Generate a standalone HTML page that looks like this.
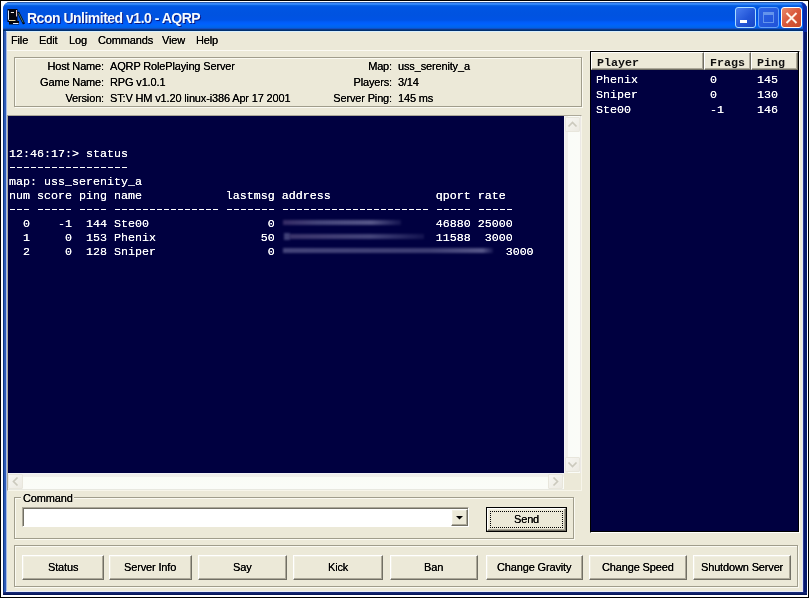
<!DOCTYPE html>
<html><head><meta charset="utf-8">
<style>
*{margin:0;padding:0;box-sizing:border-box}
html,body{width:809px;height:598px;overflow:hidden;background:#fff;position:relative}
body{font-family:"Liberation Sans",sans-serif;font-size:11px;color:#000;letter-spacing:-0.15px}
.mono{letter-spacing:0}
.a{position:absolute}
.t{position:absolute;white-space:pre;line-height:13px;height:13px;will-change:transform;text-shadow:0 0 0.15px #000}
.bl{display:inline-block;will-change:transform;text-shadow:0 0 0.15px #000}
.mono{font-family:"Liberation Mono",monospace;font-size:11.67px;white-space:pre}
.btn{position:absolute;background:#ece9d8;border-top:1px solid #fff;border-left:1px solid #fff;border-right:1px solid #716f64;border-bottom:1px solid #716f64;box-shadow:inset -1px -1px 0 #aca899, inset 1px 1px 0 #f1efe2;text-align:center;line-height:22px}
.etch{position:absolute;border:1px solid #a09d8c;box-shadow:1px 1px 0 #fbfaf2, inset 1px 1px 0 #fbfaf2}
.hdr{position:absolute;top:52px;height:18px;background:#ece9d8;border-top:1px solid #fff;border-left:1px solid #fff;border-right:1px solid #716f64;border-bottom:1px solid #716f64;box-shadow:inset -1px -1px 0 #aca899}
.sbb{position:absolute;width:15px;height:15px;background:linear-gradient(135deg,#f7f6f2,#eceae2);border:1px solid #e8e6dc;border-radius:1px}
</style></head><body>
<!-- outer black line -->
<div class="a" style="left:0;top:0;width:809px;height:598px;border:1px solid #000"></div>

<!-- window frame -->
<div class="a" style="left:3px;top:2px;width:804px;height:593px;border-radius:7px 7px 0 0;background:#0c2a7a"></div>
<div class="a" style="left:3px;top:31px;width:3px;height:561px;background:linear-gradient(90deg,#0d3580 0,#0d3580 1px,#2a58b4 1px,#2e5cb8 3px)"></div>
<div class="a" style="left:6px;top:31px;width:1px;height:561px;background:#a8bce8"></div>
<div class="a" style="left:802px;top:31px;width:1px;height:561px;background:#dde5f5"></div>
<div class="a" style="left:803px;top:31px;width:1px;height:561px;background:#2a3590"></div>
<div class="a" style="left:804px;top:31px;width:3px;height:564px;background:#04186a"></div>
<div class="a" style="left:3px;top:592px;width:804px;height:3px;background:linear-gradient(#1a2e7e,#001050)"></div>
<div class="a" style="left:7px;top:588px;width:796px;height:3px;background:#e2e3e8"></div>
<div class="a" style="left:6px;top:591px;width:797px;height:1px;background:#e8ecfa"></div>

<!-- title bar -->
<div class="a" style="left:3px;top:2px;width:804px;height:29px;border-radius:7px 7px 0 0;
 background:linear-gradient(#2a5db0 0px,#2a5db0 1px,#3a8cff 1px,#2b7ff5 3px,#0a6be8 3px,#065ce0 4px,#0055e3 5px,#0053e0 13px,#0053e5 18px,#005cf8 20px,#0060ff 22px,#0066f2 24px,#0060e8 26px,#1050c8 26px,#1050c8 27px,#0a3a8a 27px,#0a3a8a 28px,#003070 28px)"></div>
<div class="a" style="left:6px;top:31px;width:797px;height:1px;background:#d8f0ff"></div>
<div class="a" style="left:799px;top:2px;width:8px;height:30px;border-radius:0 7px 0 0;border-right:4px solid #0a2aa8;border-top:1px solid #1a50d0"></div>

<!-- client -->
<div class="a" style="left:7px;top:32px;width:795px;height:559px;background:#ece9d8"></div>
<div class="a" style="left:7px;top:50px;width:795px;height:1px;background:#fbfaf4"></div>

<!-- app icon -->
<svg class="a" style="left:6px;top:7px" width="20" height="19" viewBox="0 0 20 19">
 <rect x="1.5" y="2" width="10" height="13" fill="#06060e"/>
 <path d="M2.5 3.5 V12.5 Q2.5 13.7 4 13.7 H9.5" fill="none" stroke="#dce8ff" stroke-width="1"/>
 <path d="M4 13.7 H9" stroke="#f0dc90" stroke-width="1"/>
 <path d="M10.5 3 V9.5" stroke="#f0c8c0" stroke-width="1"/>
 <path d="M4.8 5.5 H8" stroke="#f4f0ec" stroke-width="1"/>
 <rect x="3" y="14" width="10" height="3.5" fill="#05050a"/>
 <path d="M7 16.5 H12.5" stroke="#e4ecf8" stroke-width="1"/>
 <path d="M12 5 L18 17" stroke="#020a18" stroke-width="2.4"/>
 <path d="M12.6 6.2 L17.2 15.4" stroke="#5a9a8a" stroke-width="0.8"/>
</svg>

<!-- title text -->
<div class="t" style="left:27px;top:10px;font-size:14px;font-weight:bold;color:#f4fcff;letter-spacing:-0.5px;line-height:16px;height:16px;text-shadow:1px 1px 0 #0a1883">Rcon Unlimited v1.0 - AQRP</div>

<!-- title buttons -->
<div class="a" style="left:735px;top:7px;width:21px;height:21px;border:1px solid #a8dcff;border-radius:3px;background:linear-gradient(135deg,#4a7ef0,#2356d8 55%,#1a48c4)"></div>
<div class="a" style="left:740px;top:20px;width:7px;height:3px;background:#fff"></div>
<div class="a" style="left:758px;top:7px;width:21px;height:21px;border:1px solid #62a0f8;border-radius:3px;background:linear-gradient(135deg,#2e64e4,#1f52d8)"></div>
<div class="a" style="left:763px;top:12px;width:11px;height:11px;border:1px solid #6494ec;border-top-width:3px"></div>
<div class="a" style="left:781px;top:7px;width:21px;height:21px;border:1px solid #fff;border-radius:3px;background:linear-gradient(135deg,#e88a6a,#d9573a 50%,#c84a2a)"></div>
<svg class="a" style="left:781px;top:7px" width="21" height="21" viewBox="0 0 21 21">
 <path d="M5.5 6 L15.5 16 M15.5 6 L5.5 16" stroke="#fff4ea" stroke-width="2"/>
</svg>

<!-- menu -->
<div class="t" style="left:11px;top:34px">File</div>
<div class="t" style="left:39px;top:34px">Edit</div>
<div class="t" style="left:69px;top:34px">Log</div>
<div class="t" style="left:98px;top:34px">Commands</div>
<div class="t" style="left:162px;top:34px">View</div>
<div class="t" style="left:196px;top:34px">Help</div>

<!-- info panel -->
<div class="etch" style="left:14px;top:57px;width:568px;height:50px"></div>
<div class="t" style="left:0;width:104px;text-align:right;top:60px">Host Name:</div>
<div class="t" style="left:0;width:104px;text-align:right;top:76px">Game Name:</div>
<div class="t" style="left:0;width:104px;text-align:right;top:92px">Version:</div>
<div class="t" style="left:110px;top:60px">AQRP RolePlaying Server</div>
<div class="t" style="left:110px;top:76px">RPG v1.0.1</div>
<div class="t" style="left:110px;top:92px">ST:V HM v1.20 linux-i386 Apr 17 2001</div>
<div class="t" style="left:200px;width:192px;text-align:right;top:60px">Map:</div>
<div class="t" style="left:200px;width:192px;text-align:right;top:76px">Players:</div>
<div class="t" style="left:200px;width:192px;text-align:right;top:92px">Server Ping:</div>
<div class="t" style="left:398px;top:60px">uss_serenity_a</div>
<div class="t" style="left:398px;top:76px">3/14</div>
<div class="t" style="left:398px;top:92px">145 ms</div>

<!-- console -->
<div class="a" style="left:7px;top:115px;width:575px;height:376px;border-top:1px solid #aca899;border-left:1px solid #aca899;border-right:1px solid #f7f5ea;border-bottom:1px solid #f7f5ea"></div>
<div class="a" style="left:8px;top:116px;width:556px;height:357px;background:#000040"></div>
<!-- vertical scrollbar -->
<div class="a" style="left:564px;top:116px;width:17px;height:357px;background:linear-gradient(90deg,#f4f4f6 0,#f4f4f6 1px,#efeee9 1px,#f1f0ec 4px,#fafcf8 4px,#fbfcf8 16px,#ebe8e5 16px)"></div>
<div class="sbb" style="left:565px;top:117px"></div>
<svg class="a" style="left:565px;top:117px" width="15" height="15" viewBox="0 0 15 15"><path d="M3.5 9.5 L7.5 5.5 L11.5 9.5" fill="none" stroke="#cbc9bd" stroke-width="1.7"/></svg>
<div class="sbb" style="left:565px;top:457px"></div>
<svg class="a" style="left:565px;top:457px" width="15" height="15" viewBox="0 0 15 15"><path d="M3.5 5.5 L7.5 9.5 L11.5 5.5" fill="none" stroke="#cbc9bd" stroke-width="1.7"/></svg>
<!-- horizontal scrollbar -->
<div class="a" style="left:8px;top:473px;width:556px;height:17px;background:linear-gradient(#f2f2f8 0,#f2f2f8 1px,#efeee9 1px,#f1f0ec 4px,#fafcf6 4px,#fbfcf8 16px,#e8e8e0 16px)"></div>
<div class="sbb" style="left:8px;top:474px"></div>
<svg class="a" style="left:8px;top:474px" width="15" height="15" viewBox="0 0 15 15"><path d="M9.5 3.5 L5.5 7.5 L9.5 11.5" fill="none" stroke="#cbc9bd" stroke-width="1.7"/></svg>
<div class="sbb" style="left:548px;top:474px"></div>
<svg class="a" style="left:548px;top:474px" width="15" height="15" viewBox="0 0 15 15"><path d="M5.5 3.5 L9.5 7.5 L5.5 11.5" fill="none" stroke="#cbc9bd" stroke-width="1.7"/></svg>
<div class="a" style="left:564px;top:473px;width:17px;height:17px;background:#ece9d8"></div>

<pre class="a mono" style="left:9px;top:147px;color:#fff;line-height:14px;will-change:transform;text-shadow:0 0 0.4px #fff">12:46:17:> status
 
map: uss_serenity_a
num score ping name            lastmsg address               qport rate
 
  0    -1  144 Ste00                 0                       46880 25000
  1     0  153 Phenix               50                       11588  3000
  2     0  128 Sniper                0                                 3000</pre>
<div class="a" style="left:9px;top:167px;width:119px;height:1px;background:repeating-linear-gradient(90deg,transparent 0 1px,#fff 1px 6px,transparent 6px 7px)"></div>
<div class="a" style="left:9px;top:209px;width:21px;height:1px;background:repeating-linear-gradient(90deg,transparent 0 1px,#fff 1px 6px,transparent 6px 7px)"></div>
<div class="a" style="left:37px;top:209px;width:35px;height:1px;background:repeating-linear-gradient(90deg,transparent 0 1px,#fff 1px 6px,transparent 6px 7px)"></div>
<div class="a" style="left:79px;top:209px;width:28px;height:1px;background:repeating-linear-gradient(90deg,transparent 0 1px,#fff 1px 6px,transparent 6px 7px)"></div>
<div class="a" style="left:114px;top:209px;width:105px;height:1px;background:repeating-linear-gradient(90deg,transparent 0 1px,#fff 1px 6px,transparent 6px 7px)"></div>
<div class="a" style="left:226px;top:209px;width:49px;height:1px;background:repeating-linear-gradient(90deg,transparent 0 1px,#fff 1px 6px,transparent 6px 7px)"></div>
<div class="a" style="left:282px;top:209px;width:147px;height:1px;background:repeating-linear-gradient(90deg,transparent 0 1px,#fff 1px 6px,transparent 6px 7px)"></div>
<div class="a" style="left:436px;top:209px;width:35px;height:1px;background:repeating-linear-gradient(90deg,transparent 0 1px,#fff 1px 6px,transparent 6px 7px)"></div>
<div class="a" style="left:478px;top:209px;width:35px;height:1px;background:repeating-linear-gradient(90deg,transparent 0 1px,#fff 1px 6px,transparent 6px 7px)"></div>
<div class="a" style="left:283px;top:220px;width:118px;height:5px;background:linear-gradient(90deg,rgba(150,120,170,.35),rgba(170,170,210,.4) 30%,rgba(190,190,225,.45) 75%,rgba(120,120,170,.15));filter:blur(1.2px)"></div>
<div class="a" style="left:284px;top:233px;width:6px;height:7px;background:rgba(180,180,220,.35);filter:blur(1px)"></div>
<div class="a" style="left:290px;top:234px;width:134px;height:5px;background:linear-gradient(90deg,rgba(170,150,190,.35),rgba(170,170,210,.4) 60%,rgba(120,120,170,.15));filter:blur(1.2px)"></div>
<div class="a" style="left:283px;top:248px;width:210px;height:5px;background:linear-gradient(90deg,rgba(170,170,210,.4),rgba(160,160,200,.38) 70%,rgba(190,190,225,.45) 95%,rgba(120,120,170,.15));filter:blur(1.2px)"></div>
<!-- command group -->
<div class="etch" style="left:14px;top:497px;width:560px;height:42px"></div>
<div class="t" style="left:21px;top:492px;height:11px;background:#ece9d8;padding:0 1px 0 2px">Command</div>
<div class="a" style="left:22px;top:507px;width:447px;height:20px;background:#fff;border-top:1px solid #aca899;border-left:1px solid #aca899;border-right:1px solid #fff;border-bottom:1px solid #fff;box-shadow:inset 1px 1px 0 #716f64"></div>
<div class="btn" style="left:451px;top:509px;width:17px;height:17px"></div>
<svg class="a" style="left:451px;top:509px" width="17" height="17" viewBox="0 0 17 17"><path d="M5 7 H12 L8.5 10.5 Z" fill="#000"/></svg>
<div class="a" style="left:486px;top:507px;width:81px;height:25px;border:1px solid #000;background:#ece9d8"></div>
<div class="btn" style="left:487px;top:508px;width:79px;height:23px;line-height:21px"><span class="bl">Send</span></div>
<div class="a" style="left:490px;top:511px;width:73px;height:17px;border:1px dotted #000"></div>

<!-- player list -->
<div class="a" style="left:590px;top:51px;width:210px;height:482px;background:#000040;border-top:1px solid #000;border-left:1px solid #000;border-right:1px solid #fff;border-bottom:1px solid #fff"></div>
<div class="a" style="left:798px;top:51px;width:1px;height:481px;background:#000"></div>
<div class="a" style="left:590px;top:531px;width:209px;height:1px;background:#000"></div>
<div class="hdr" style="left:591px;width:113px"></div>
<div class="hdr" style="left:704px;width:47px"></div>
<div class="hdr" style="left:751px;width:47px"></div>
<div class="a mono" style="left:597px;top:56px;line-height:14px;will-change:transform;font-weight:bold;color:#101010">Player</div>
<div class="a mono" style="left:710px;top:56px;line-height:14px;will-change:transform;font-weight:bold;color:#101010">Frags</div>
<div class="a mono" style="left:757px;top:56px;line-height:14px;will-change:transform;font-weight:bold;color:#101010">Ping</div>
<pre class="a mono" style="left:596px;top:73px;line-height:15px;color:#fff;will-change:transform;text-shadow:0 0 0.4px #fff">Phenix
Sniper
Ste00</pre>
<pre class="a mono" style="left:710px;top:73px;line-height:15px;color:#fff;will-change:transform;text-shadow:0 0 0.4px #fff">0
0
-1</pre>
<pre class="a mono" style="left:757px;top:73px;line-height:15px;color:#fff;will-change:transform;text-shadow:0 0 0.4px #fff">145
130
146</pre>

<!-- bottom buttons -->
<div class="etch" style="left:14px;top:545px;width:784px;height:42px"></div>
<div class="btn" style="left:22px;top:555px;width:82px;height:25px"><span class="bl">Status</span></div>
<div class="btn" style="left:109px;top:555px;width:83px;height:25px"><span class="bl">Server Info</span></div>
<div class="btn" style="left:198px;top:555px;width:89px;height:25px"><span class="bl">Say</span></div>
<div class="btn" style="left:293px;top:555px;width:90px;height:25px"><span class="bl">Kick</span></div>
<div class="btn" style="left:390px;top:555px;width:88px;height:25px"><span class="bl">Ban</span></div>
<div class="btn" style="left:486px;top:555px;width:97px;height:25px"><span class="bl">Change Gravity</span></div>
<div class="btn" style="left:589px;top:555px;width:98px;height:25px"><span class="bl">Change Speed</span></div>
<div class="btn" style="left:693px;top:555px;width:98px;height:25px"><span class="bl">Shutdown Server</span></div>
</body></html>
